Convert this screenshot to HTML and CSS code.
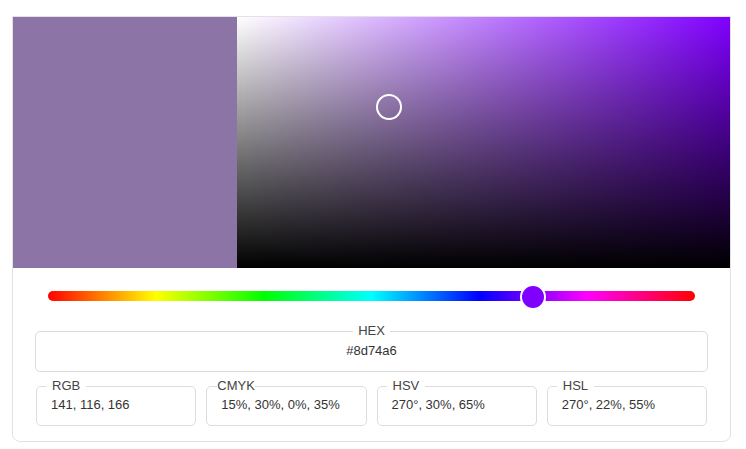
FILE: index.html
```html
<!DOCTYPE html>
<html>
<head>
<meta charset="utf-8">
<link rel="stylesheet" href="styles.css">
</head>
<body>
<div class="card">
  <div class="top">
    <div class="swatch"></div>
    <div class="sv">
      <div class="sv-cursor" style="left: 30.8%; top: 35.9%;"></div>
    </div>
  </div>
  <div class="controls">
    <div class="hue">
      <div class="hue-thumb" style="left: 75%;"></div>
    </div>
    <fieldset class="field field-hex">
      <legend>HEX</legend>
      <div class="value">#8d74a6</div>
    </fieldset>
    <div class="row">
      <fieldset class="field">
        <legend>RGB</legend>
        <div class="value">141, 116, 166</div>
      </fieldset>
      <fieldset class="field field-tight">
        <legend>CMYK</legend>
        <div class="value">15%, 30%, 0%, 35%</div>
      </fieldset>
      <fieldset class="field">
        <legend>HSV</legend>
        <div class="value">270°, 30%, 65%</div>
      </fieldset>
      <fieldset class="field">
        <legend>HSL</legend>
        <div class="value">270°, 22%, 55%</div>
      </fieldset>
    </div>
  </div>
</div>
</body>
</html>
```
FILE: styles.css
```css
* { box-sizing: border-box; }
html, body { background: #fff; }
body {
  margin: 16px 12px;
  font-family: "Liberation Sans", Arial, sans-serif;
  font-size: 13px;
  color: #333;
}
.card {
  width: 719px;
  border: 1px solid #e2e2e2;
  border-radius: 0 0 8px 8px;
  background: #fff;
}
.top {
  display: flex;
  height: 251px;
}
.swatch {
  width: 224px;
  background: #8d74a6;
}
.sv {
  flex: 1;
  position: relative;
  background:
    linear-gradient(to top, #000, rgba(0,0,0,0)),
    linear-gradient(to right, #fff, #8000ff);
}
.sv-cursor {
  position: absolute;
  width: 26px;
  height: 26px;
  margin: -13px 0 0 -13px;
  border: 2px solid #fff;
  border-radius: 50%;
}
.controls {
  padding: 23px 22px 15px;
}
.hue {
  position: relative;
  height: 10px;
  margin: 0 13px;
  border-radius: 5px;
  background: linear-gradient(to right, #f00 0%, #ff0 16.66%, #0f0 33.33%, #0ff 50%, #00f 66.66%, #f0f 83.33%, #f00 100%);
}
.hue-thumb {
  position: absolute;
  top: 50%;
  width: 26px;
  height: 26px;
  margin: -12px 0 0 -13px;
  border: 2px solid #fff;
  border-radius: 50%;
  background: #8000ff;
}
.field {
  margin: 0;
  min-width: 0;
  border: 1px solid #dcdcdc;
  border-radius: 5px;
  padding: 3px 14px 12px;
}
.field legend {
  padding: 0 6px;
  margin-left: -5px;
  line-height: 16px;
  color: #444;
}
.field .value {
  line-height: 16px;
  white-space: nowrap;
}
.field-hex {
  margin-top: 22px;
  padding-top: 4px;
  text-align: center;
}
.field-hex legend {
  margin: 0 auto;
  padding: 0 5px;
}
.field-tight legend {
  padding: 0;
  margin-left: -4px;
}
.row {
  display: grid;
  grid-template-columns: repeat(4, 1fr);
  column-gap: 10px;
  margin: 6px 1px 0;
}
```
